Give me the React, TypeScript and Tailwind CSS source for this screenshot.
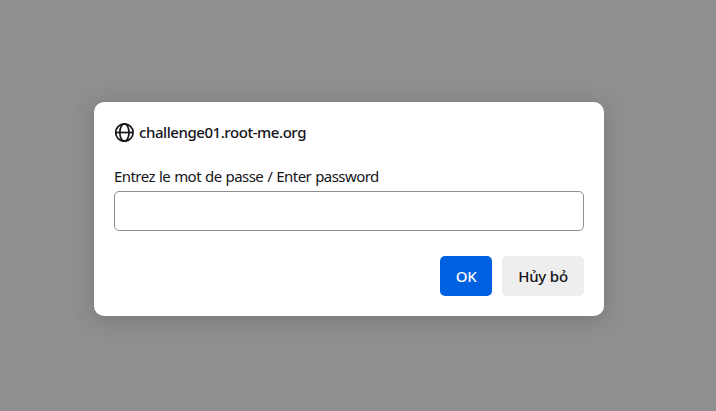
const textFont = "font-['Noto_Sans','Open_Sans',sans-serif]";

function GlobeIcon() {
  return (
    <svg
      width="20"
      height="20"
      viewBox="0 0 20 20"
      fill="none"
      stroke="#15141a"
      strokeWidth="1.7"
      className="shrink-0"
      aria-hidden="true"
    >
      <circle cx="10.4" cy="10.5" r="8.7" />
      <ellipse cx="10.4" cy="10.5" rx="4.6" ry="8.7" />
      <path d="M1.8 10.5h17.2" />
    </svg>
  );
}

export default function App() {
  return (
    <main
      className={`flex h-[411px] w-[716px] items-start overflow-hidden bg-[#8f8f91] pt-[102px] pl-[94px] text-[15px] leading-5 text-[#15141a] ${textFont}`}
    >
      <section
        role="dialog"
        className="flex h-[214px] w-[510px] flex-col rounded-[10px] bg-white px-5 pt-5 pb-5 shadow-[0_3px_20px_rgba(70,58,64,0.32)]"
      >
        <header className="flex h-5 items-center gap-[5px] font-medium">
          <GlobeIcon />
          <h1 className="tracking-[-0.44px] whitespace-nowrap">challenge01.root-me.org</h1>
        </header>
        <label
          htmlFor="password"
          className="mt-6 h-5 tracking-[-0.56px] whitespace-nowrap [word-spacing:0.67px]"
        >
          Entrez le mot de passe / Enter password
        </label>
        <input
          id="password"
          className="mt-[5px] h-10 w-full rounded-[5px] border border-[#8f8f91] bg-white px-2 outline-none"
        />
        <div className="mt-[25px] flex justify-end gap-[10px] font-medium">
          <button className="h-10 w-[52px] rounded-[5px] bg-[#0061e0] tracking-[-0.4px] text-[#fbfbfe]">OK</button>
          <button className="h-10 w-[82px] rounded-[5px] bg-[#eeeeee] tracking-[-0.2px]">Hủy bỏ</button>
        </div>
      </section>
    </main>
  );
}
